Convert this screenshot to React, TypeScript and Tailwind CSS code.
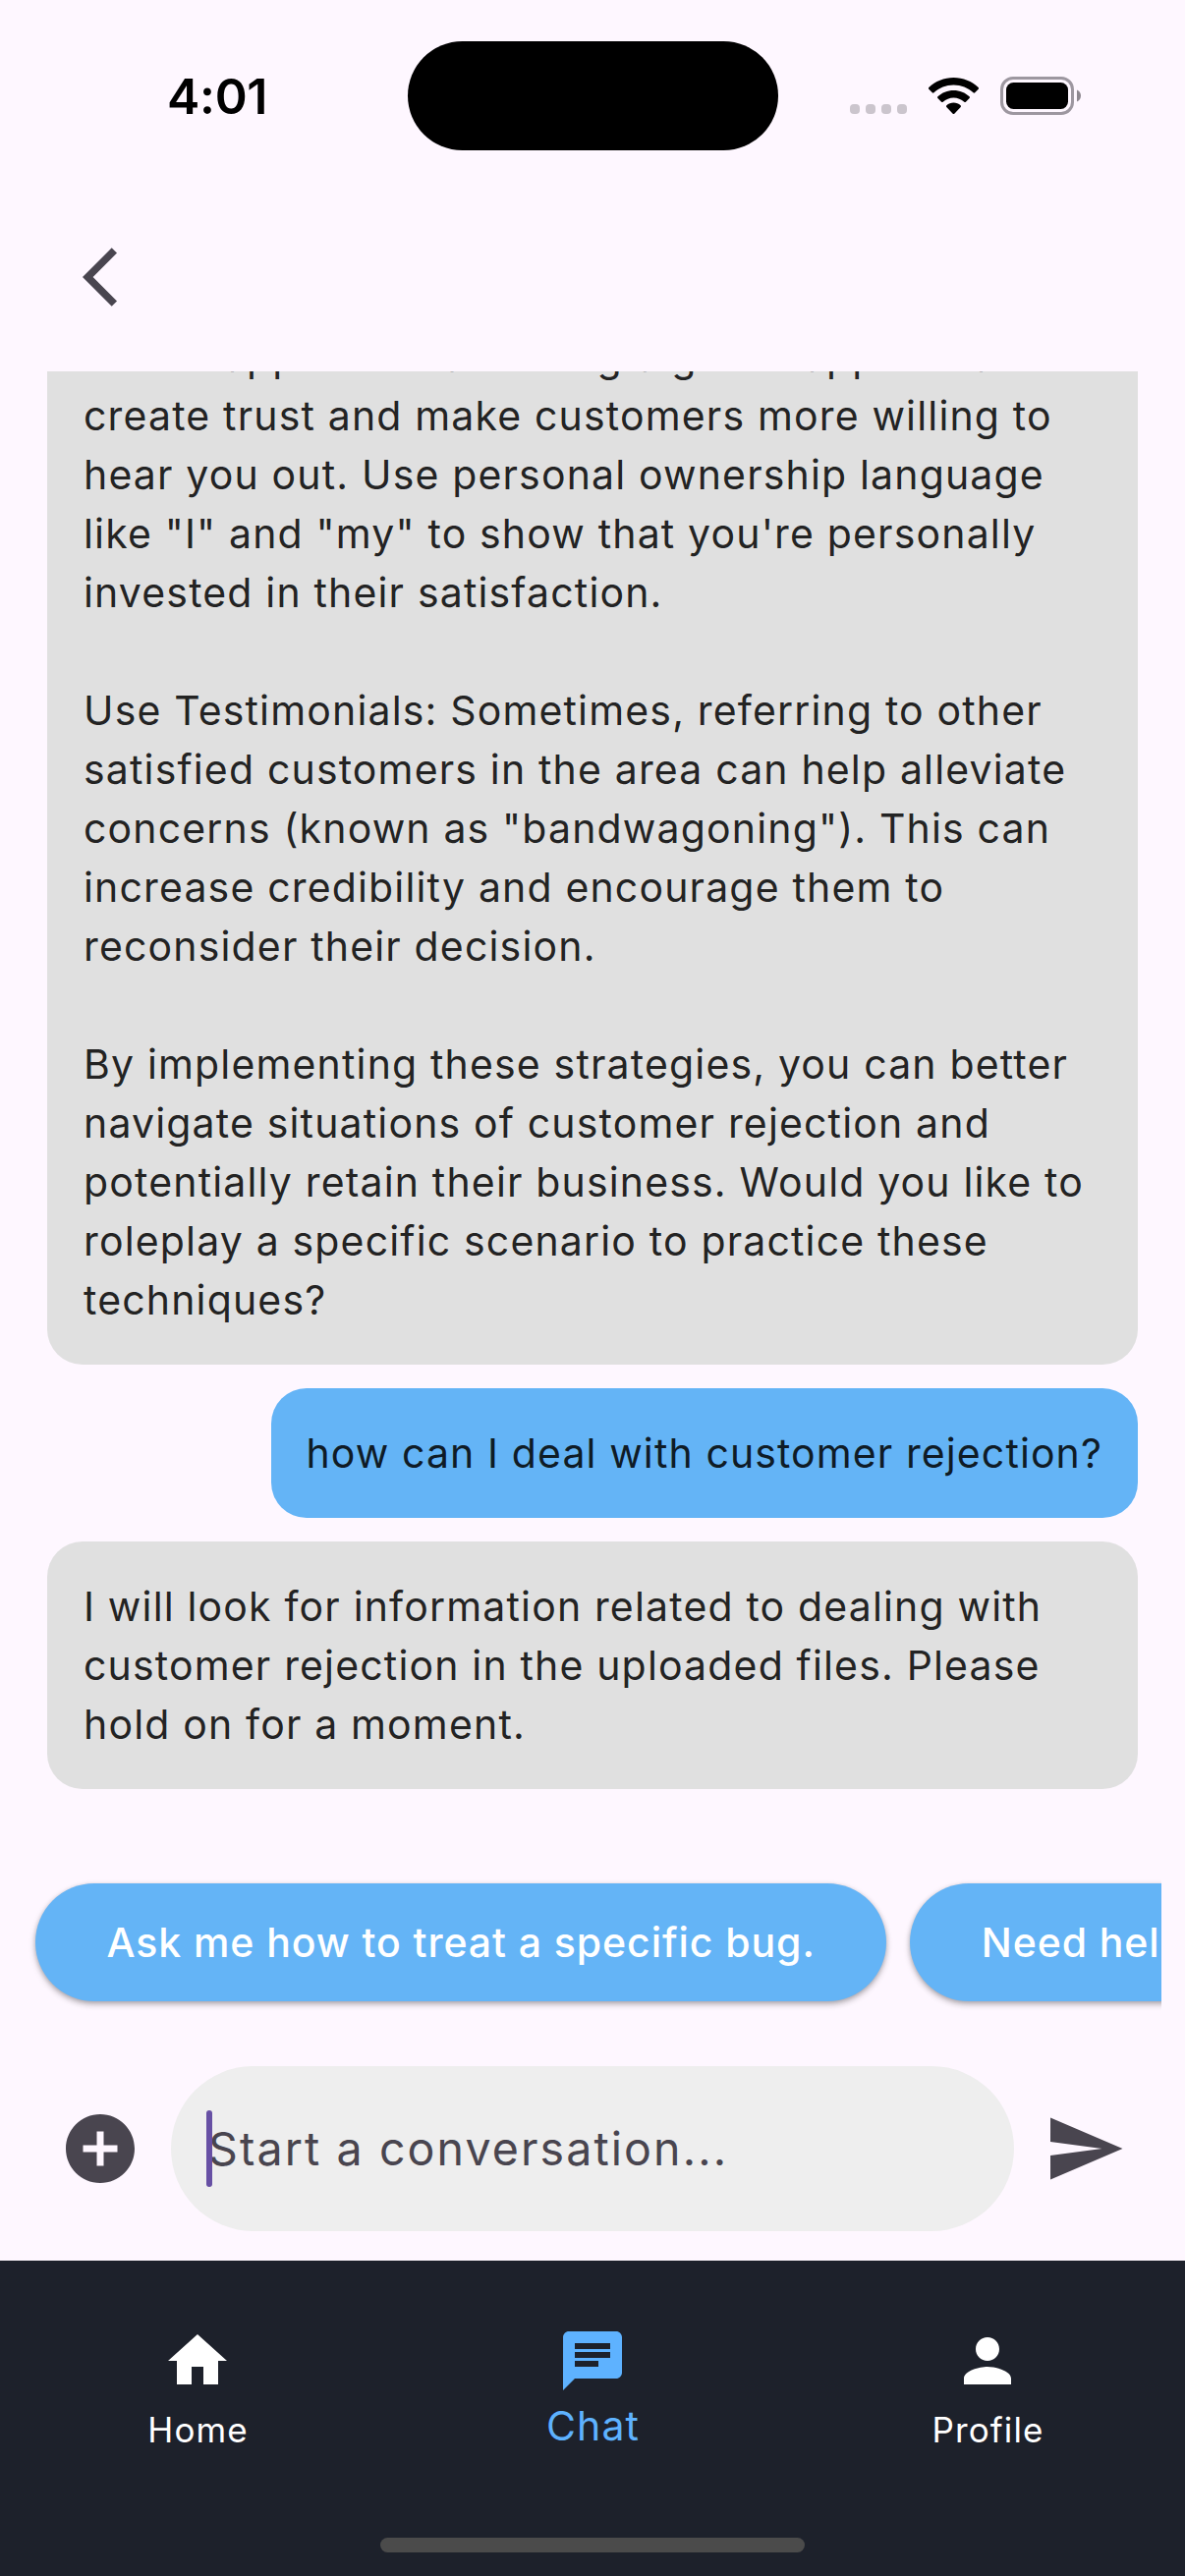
import type { ReactNode } from "react";

const assistantTips = [
  "Build Rapport: Establishing a good rapport can",
  "create trust and make customers more willing to",
  "hear you out. Use personal ownership language",
  "like \"I\" and \"my\" to show that you're personally",
  "invested in their satisfaction.",
  "",
  "Use Testimonials: Sometimes, referring to other",
  "satisfied customers in the area can help alleviate",
  "concerns (known as \"bandwagoning\"). This can",
  "increase credibility and encourage them to",
  "reconsider their decision.",
  "",
  "By implementing these strategies, you can better",
  "navigate situations of customer rejection and",
  "potentially retain their business. Would you like to",
  "roleplay a specific scenario to practice these",
  "techniques?",
].join("\n");

const assistantSearch = [
  "I will look for information related to dealing with",
  "customer rejection in the uploaded files. Please",
  "hold on for a moment.",
].join("\n");

function StatusBar() {
  return (
    <div className="flex h-[195px] shrink-0 items-start">
      <div className="flex h-[195px] w-[415px] items-center justify-start pl-[170px] text-[50px] font-semibold leading-none tracking-[-0.300px] text-black">
        4:01
      </div>
      <div className="mt-[41.5px] h-[111px] w-[376.5px] rounded-full bg-black" />
      <div className="flex pl-[73.5px] pt-[78px]">
        <div className="flex gap-1.5 pt-7">
          {[0, 1, 2, 3].map((dot) => (
            <span key={dot} className="h-2.5 w-2.5 rounded-[4px] bg-[#cbc5cd]" />
          ))}
        </div>
        <svg className="ml-[22px] mt-px h-[38px] w-[51px]" viewBox="0 0 51 38">
          <path d="M25.5 0C35.2 0 44.1 3.8 50.7 10c.5.5.5 1.2 0 1.700l-3.500 3.600c-.5.5-1.200.5-1.700 0C40.200 10.500 33.200 7.600 25.500 7.600S10.800 10.500 5.500 15.300c-.5.5-1.200.5-1.700 0L.3 11.700c-.5-.5-.5-1.200 0-1.700C6.900 3.800 15.800 0 25.500 0z" />
          <path d="M25.500 12.900c6.200 0 11.900 2.400 16.100 6.400.5.5.5 1.200 0 1.700l-3.700 3.700c-.4.5-1.100.5-1.600.1-2.900-2.600-6.700-4.200-10.800-4.200s-7.900 1.600-10.800 4.200c-.5.4-1.200.4-1.600-.1L9.400 21c-.5-.5-.5-1.200 0-1.700 4.200-4 9.900-6.400 16.100-6.400z" />
          <path d="M25.500 25.600c2.700 0 5.200 1 7.100 2.700.5.5.5 1.200.1 1.700l-6.400 6.700c-.4.5-1.200.5-1.600 0L18.300 30c-.4-.5-.4-1.200.1-1.700 1.900-1.700 4.400-2.700 7.100-2.700z" />
        </svg>
        <svg className="ml-[22px] h-[39px] w-[83px]" viewBox="0 0 83 39">
          <rect x="1.500" y="1.500" width="72" height="36" rx="11.500" fill="none" stroke="#9d97a0" strokeWidth="3" />
          <rect x="6" y="6" width="63" height="27" rx="7.500" />
          <path d="M78 13.500c2.400 1 4 3.300 4 6s-1.600 5-4 6z" fill="#8d878f" />
        </svg>
      </div>
    </div>
  );
}

function BotBubble({ children }: { children: ReactNode }) {
  return (
    <div className="shrink-0 whitespace-pre rounded-[36px] bg-[#e0e0e0] py-9 pl-[37px] text-black/87">
      {children}
    </div>
  );
}

function Chip({ children }: { children: ReactNode }) {
  return (
    <div className="flex h-[120px] shrink-0 items-center whitespace-nowrap rounded-full bg-[#64b4f6] px-[72.500px] pt-0.5 text-[41px] font-medium tracking-[0.920px] text-white shadow-[0_3px_6px_rgba(0,0,0,0.28),0_1px_4px_rgba(0,0,0,0.12)]">
      {children}
    </div>
  );
}

function NavItem({
  label,
  icon,
  active = false,
}: {
  label: string;
  icon: string;
  active?: boolean;
}) {
  return (
    <div
      className={
        active
          ? "flex flex-1 flex-col items-center pt-[66px] text-[#5eb2ff]"
          : "flex flex-1 flex-col items-center pt-[66px] text-white"
      }
    >
      <svg className="h-[72px] w-[72px]" viewBox="0 0 24 24" fill="currentColor">
        <path d={icon} />
      </svg>
      <span
        className={
          active
            ? "pl-px text-[41px] leading-[60px] tracking-[1.100px]"
            : "mt-2.5 pl-px text-[35px] leading-[48px] tracking-[1.100px]"
        }
      >
        {label}
      </span>
    </div>
  );
}

export default function App() {
  return (
    <div className="flex h-[2622px] w-[1206px] flex-col overflow-hidden bg-[#fef7ff] font-['Inter',sans-serif]">
      <StatusBar />

      <header className="flex h-[183px] shrink-0 items-start pl-[84px] pt-[51px]">
        <svg className="h-[72px] w-[72px]" viewBox="0 0 24 24" fill="#49454f">
          <path d="M11.670 3.870 9.900 2.100 0 12l9.900 9.900 1.770-1.770L3.540 12z" />
        </svg>
      </header>

      <main className="flex h-[1455px] shrink-0 flex-col justify-end gap-6 overflow-hidden px-12 pb-3 text-[41px] leading-[60px] tracking-[1.160px]">
        <BotBubble>{assistantTips}</BotBubble>
        <div className="shrink-0 self-end rounded-[36px] bg-[#64b4f6] p-9 tracking-[1.100px] text-black/87">
          how can I deal with customer rejection?
        </div>
        <BotBubble>{assistantSearch}</BotBubble>
      </main>

      <div className="mx-6 mt-[60px] flex h-[168px] shrink-0 gap-6 overflow-hidden px-3 pt-6">
        <Chip>Ask me how to treat a specific bug.</Chip>
        <Chip>Need help?</Chip>
      </div>

      <div className="mt-[42px] flex h-[168px] shrink-0 items-center pl-[60px]">
        <svg className="h-[84px] w-[84px]" viewBox="0 0 24 24" fill="#49454f">
          <path d="M12 2C6.480 2 2 6.480 2 12s4.480 10 10 10 10-4.480 10-10S17.520 2 12 2zm5 11h-4v4h-2v-4H7v-2h4V7h2v4h4v2z" />
        </svg>
        <div className="relative ml-[30px] flex h-[168px] w-[858px] items-center rounded-full bg-[#eeeeee] pl-[38px] pt-0.5 text-[46.500px] tracking-[2.100px] text-[#49454f]">
          Start a conversation...
          <span className="absolute left-9 top-[45px] h-[78px] w-1.5 rounded-full bg-[#6750a4]" />
        </div>
        <svg className="ml-[30px] h-[84px] w-[84px]" viewBox="0 0 24 24" fill="#49454f">
          <path d="M2.010 21 23 12 2.010 3 2 10l15 2-15 2z" />
        </svg>
      </div>

      <nav className="mt-[30px] flex min-h-0 flex-1 flex-col bg-[#1d212b]">
        <div className="flex h-[282px] shrink-0">
          <NavItem label="Home" icon="M10 20v-6h4v6h5v-8h3L12 3 2 12h3v8z" />
          <NavItem
            active
            label="Chat"
            icon="M20 2H4c-1.100 0-1.990.9-1.990 2L2 22l4-4h14c1.100 0 2-.9 2-2V4c0-1.100-.9-2-2-2zM6 9h12v2H6V9zm8 5H6v-2h8v2zm4-6H6V6h12v2z"
          />
          <NavItem
            label="Profile"
            icon="M12 12c2.210 0 4-1.790 4-4s-1.790-4-4-4-4 1.790-4 4 1.790 4 4 4zm0 2c-2.670 0-8 1.340-8 4v2h16v-2c0-2.660-5.330-4-8-4z"
          />
        </div>
        <div className="mx-auto h-[15px] w-[432px] rounded-full bg-[#4b4b4b]" />
      </nav>
    </div>
  );
}
